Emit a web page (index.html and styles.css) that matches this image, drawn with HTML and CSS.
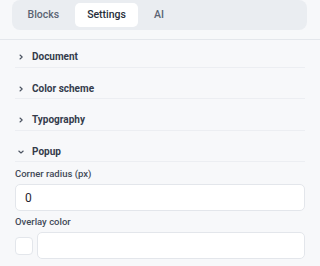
FILE: index.html
```html
<!DOCTYPE html>
<html lang="en">
<head>
  <meta charset="UTF-8" />
  <meta name="viewport" content="width=device-width, initial-scale=1.0"/>
  <title>Editor sidebar</title>
  <link rel="stylesheet" href="styles.css">
</head>
<body>
  <div class="sidebar">
    <!-- Tabs -->
    <div class="tabs-wrap">
      <div class="tabs">
        <button class="tab">Blocks</button>
        <button class="tab active">Settings</button>
        <button class="tab">AI</button>
      </div>
    </div>

    <!-- Settings sections -->
    <div class="sections">
      <div class="section">
        <div class="section-head">
          <svg class="chev" viewBox="0 0 8 8"><polyline points="3,2 5.2,4 3,6"/></svg>
          <span>Document</span>
        </div>
      </div>
      <div class="section">
        <div class="section-head">
          <svg class="chev" viewBox="0 0 8 8"><polyline points="3,2 5.2,4 3,6"/></svg>
          <span>Color scheme</span>
        </div>
      </div>
      <div class="section">
        <div class="section-head">
          <svg class="chev" viewBox="0 0 8 8"><polyline points="3,2 5.2,4 3,6"/></svg>
          <span>Typography</span>
        </div>
      </div>
      <div class="section open">
        <div class="section-head">
          <svg class="chev" viewBox="0 0 8 8"><polyline points="1.8,3 4,5 6.2,3"/></svg>
          <span>Popup</span>
        </div>
      </div>

      <div class="section-body">
        <div class="field">
          <label>Corner radius (px)</label>
          <input type="text" value="0">
        </div>
        <div class="field">
          <label>Overlay color</label>
          <div class="color-row">
            <span class="swatch"></span>
            <input type="text" value="">
          </div>
        </div>
      </div>
    </div>
  </div>
</body>
</html>
```

FILE: styles.css
```css
* { box-sizing: border-box; }

body {
  margin: 0;
  padding: 0;
  background: #f7f8fa;
  font-family: Roboto, 'Liberation Sans', sans-serif;
  color: #2f3747;
}

.tabs-wrap {
  padding: 0 13px 9px 12px;
  border-bottom: 1px solid #e4e7ec;
}

.tabs {
  display: flex;
  gap: 3px;
  padding: 3px;
  height: 30px;
  background: #eaedf1;
  border-radius: 8px;
}

.tab {
  border: none;
  background: transparent;
  font-family: inherit;
  font-size: 10.5px;
  font-weight: 500;
  color: #5b6473;
  padding: 0 12.5px;
  height: 24px;
  line-height: 24px;
  border-radius: 5px;
}

.tab.active {
  background: #fff;
  color: #272e3a;
}

.sections {
  padding: 0 15px;
}

.section {
  border-bottom: 1px solid #eceef2;
}

.section + .section {
  margin-top: 4px;
}

.section-head {
  display: flex;
  align-items: center;
  gap: 7px;
  padding: 10px 0 2px 2px;
  height: 26.5px;
  font-size: 10px;
  font-weight: 700;
  line-height: 14px;
  color: #343c4c;
}

.chev {
  width: 8px;
  height: 8px;
  fill: none;
  stroke: #4b5361;
  stroke-width: 1.1;
  stroke-linecap: round;
  stroke-linejoin: round;
}

.section-body {
  padding-top: 6px;
}

.field {
  margin-bottom: 5px;
}

.field label {
  display: block;
  font-size: 9.5px;
  font-weight: 500;
  line-height: 12px;
  color: #424a58;
  margin-bottom: 4px;
}

.field input {
  display: block;
  width: 100%;
  height: 27px;
  padding: 0 9px;
  border: 1px solid #e3e6eb;
  border-radius: 5px;
  background: #fff;
  font-family: inherit;
  font-size: 12px;
  color: #1f2430;
  outline: none;
}

.color-row {
  display: flex;
  align-items: center;
  gap: 4px;
}

.swatch {
  flex: none;
  width: 18px;
  height: 18px;
  border: 1px solid #e3e6eb;
  border-radius: 4px;
  background: #fff;
}
```
